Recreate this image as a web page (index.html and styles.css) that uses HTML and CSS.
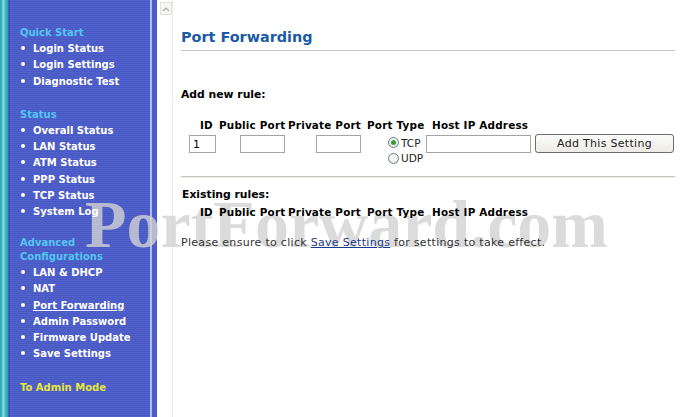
FILE: index.html
```html
<!DOCTYPE html>
<html lang="en">
<head>
	<meta charset="UTF-8">
	<meta name="viewport" content="width=device-width, initial-scale=1.0">
	<title>Port Forwarding</title>
	<link rel="stylesheet" href="styles.css">
</head>
<body>
	<div class="page">
		<nav class="menu">
			<div class="group">
				<div class="menu-head">Quick Start</div>
				<ul>
					<li><a href="#">Login Status</a></li>
					<li><a href="#">Login Settings</a></li>
					<li><a href="#">Diagnostic Test</a></li>
				</ul>
			</div>
			<div class="group">
				<div class="menu-head">Status</div>
				<ul>
					<li><a href="#">Overall Status</a></li>
					<li><a href="#">LAN Status</a></li>
					<li><a href="#">ATM Status</a></li>
					<li><a href="#">PPP Status</a></li>
					<li><a href="#">TCP Status</a></li>
					<li><a href="#">System Log</a></li>
				</ul>
			</div>
			<div class="group group-adv">
				<div class="menu-head">Advanced<br>Configurations</div>
				<ul>
					<li><a href="#">LAN &amp; DHCP</a></li>
					<li><a href="#">NAT</a></li>
					<li><a href="#" class="current">Port Forwarding</a></li>
					<li><a href="#">Admin Password</a></li>
					<li><a href="#">Firmware Update</a></li>
					<li><a href="#">Save Settings</a></li>
				</ul>
			</div>
			<div class="group">
				<div class="menu-head admin">To Admin Mode</div>
			</div>
		</nav>

		<div class="frame-bar">
			<div class="scroll-up">
				<svg width="8" height="6" viewBox="0 0 8 6"><path d="M1 5 L4 2 L7 5" fill="none" stroke="#a8a8a8" stroke-width="1.2"/></svg>
			</div>
		</div>

		<main class="content">
			<h1>Port Forwarding</h1>

			<h2>Add new rule:</h2>
			<div class="rules">
				<span class="th th-id">ID</span>
				<span class="th">Public Port</span>
				<span class="th">Private Port</span>
				<span class="th">Port Type</span>
				<span class="th th-host">Host IP Address</span>
				<span></span>

				<div><input type="text" class="in-id" value="1"></div>
				<div><input type="text" class="in-port in-public"></div>
				<div><input type="text" class="in-port in-private"></div>
				<div class="types">
					<label><span class="radio on"></span>TCP</label>
					<label><span class="radio"></span>UDP</label>
				</div>
				<div><input type="text" class="in-host"></div>
				<div><button type="button">Add This Setting</button></div>
			</div>

			<hr>

			<h2 class="existing">Existing rules:</h2>
			<div class="rules rules-existing">
				<span class="th th-id">ID</span>
				<span class="th">Public Port</span>
				<span class="th">Private Port</span>
				<span class="th">Port Type</span>
				<span class="th th-host">Host IP Address</span>
				<span></span>
			</div>

			<p class="note">Please ensure to click <a href="#">Save Settings</a> for settings to take effect.</p>
		</main>
	</div>

	<div class="watermark">PortForward.com</div>
</body>
</html>
```

FILE: styles.css
```css
body {
	margin: 0;
	height: 417px;
	overflow: hidden;
	position: relative;
	background: #fff;
	font-family: "DejaVu Sans", Verdana, sans-serif;
	font-size: 11px;
	color: #000;
}
.page {
	display: flex;
	height: 100%;
}

/* left menu */
.menu {
	width: 157px;
	flex: none;
	box-sizing: border-box;
	padding: 25px 0 0 20px;
	font-size: 10px;
	font-weight: bold;
	background:
		linear-gradient(to right, #2b9fae 0, #43bcc4 2px, #95e2e4 3px, #4cbfc6 5px, #2d9db0 8px, #34409c 9px, #4a5ac6 10px) 0 0 / 10px 100% no-repeat,
		linear-gradient(to right, #c0c6f2 0, #aab2ee 2px, #4c5cc8 2px) 150px 0 / 7px 100% no-repeat,
		repeating-linear-gradient(to bottom, #5262cb 0 1px, #4858c4 1px 2px);
}
.group + .group {
	margin-top: 17px;
}
.group-adv {
	margin-top: 14.3px !important;
}
.menu-head,
.menu ul,
.content {
	position: relative;
	z-index: 1;
}
.menu-head {
	color: #52c6f2;
	line-height: 14px;
	padding: 1px 0;
}
.menu-head.admin {
	color: #e6e83a;
}
.menu ul {
	list-style: none;
	margin: 0;
	padding: 0;
}
.menu li {
	line-height: 16.3px;
}
.menu li::before {
	content: "";
	display: inline-block;
	width: 4px;
	height: 4px;
	border-radius: 50%;
	background: #fff;
	margin: 0 8px 2px 1px;
	vertical-align: middle;
}
.menu a {
	color: #fff;
	text-decoration: none;
}
.menu a.current {
	text-decoration: underline;
}

/* frame scrollbar strip */
.frame-bar {
	width: 12px;
	flex: none;
	margin-left: 3px;
	border-right: 1px solid #efece2;
}
.scroll-up {
	margin-top: 2px;
	height: 11px;
	border: 1px solid #e2e2e2;
	background: #f6f6f4;
	display: flex;
	align-items: center;
	justify-content: center;
}

/* main content */
.content {
	flex: 1;
	padding: 0 25px 0 8px;
}
h1 {
	margin: 29px 0 0;
	padding-bottom: 4px;
	border-bottom: 1px solid #c4c4c4;
	font-size: 14.4px;
	line-height: 17px;
	color: #1a5aa6;
}
h2 {
	margin: 37px 0 0;
	font-size: 10.8px;
	line-height: 14px;
}
h2.existing {
	margin-top: 10px;
	padding-left: 1px;
}
.rules {
	display: grid;
	grid-template-columns: 30px 69px 79px 59px 109px 140px;
	margin-left: 8px;
	margin-top: 16px;
	align-items: start;
}
.rules-existing {
	margin-top: 3px;
}
.th {
	font-weight: bold;
	font-size: 10.4px;
	line-height: 14px;
	letter-spacing: 0.2px;
	white-space: nowrap;
}
.th-id {
	padding-left: 11px;
}
.th-host {
	padding-left: 6px;
}
input {
	box-sizing: border-box;
	height: 18px;
	margin: 3px 0 0;
	padding: 0 3px;
	border: 1px solid #a4a4a4;
	font-family: inherit;
	font-size: 11px;
	color: #000;
	background: #fff;
	outline: none;
}
.in-id {
	width: 27px;
}
.in-port {
	width: 45px;
}
.in-public {
	margin-left: 21px;
}
.in-private {
	margin-left: 28px;
}
.in-host {
	width: 105px;
}
.types {
	padding: 3px 0 0 21px;
	font-size: 10.5px;
	color: #222;
}
.types label {
	display: flex;
	align-items: center;
	height: 15.5px;
}
.radio {
	box-sizing: border-box;
	width: 11px;
	height: 11px;
	margin-right: 2px;
	border-radius: 50%;
	border: 1px solid #6d7f92;
	background: radial-gradient(circle at 40% 40%, #fff 0, #e6e6e0 80%);
	display: flex;
	align-items: center;
	justify-content: center;
}
.radio.on::after {
	content: "";
	width: 5px;
	height: 5px;
	border-radius: 50%;
	background: #3a9a3a;
}
button {
	box-sizing: border-box;
	width: 139px;
	height: 19px;
	margin-top: 2px;
	border: 1px solid #6c6c6c;
	border-radius: 3px;
	background: linear-gradient(#fbfbf9, #ecebe6);
	font-family: inherit;
	font-size: 11px;
	letter-spacing: 0.3px;
	color: #222;
	padding: 0;
	cursor: pointer;
}
hr {
	margin: 10px 0 0;
	height: 0;
	border: none;
	border-top: 1px solid #c8c8c0;
	border-bottom: 1px solid #ecece6;
}
.note {
	margin: 17px 0 0;
	font-size: 11px;
	letter-spacing: 0.3px;
	line-height: 14px;
	color: #333;
}
.note a {
	color: #1a3a8a;
}

/* watermark: above the menu background, below all text */
.watermark {
	position: absolute;
	z-index: 0;
	left: 85px;
	top: 186px;
	font-family: "Liberation Serif", "Times New Roman", serif;
	font-weight: bold;
	font-size: 68px;
	line-height: 76px;
	color: rgba(210, 210, 210, 0.8);
	pointer-events: none;
	white-space: nowrap;
}
```
